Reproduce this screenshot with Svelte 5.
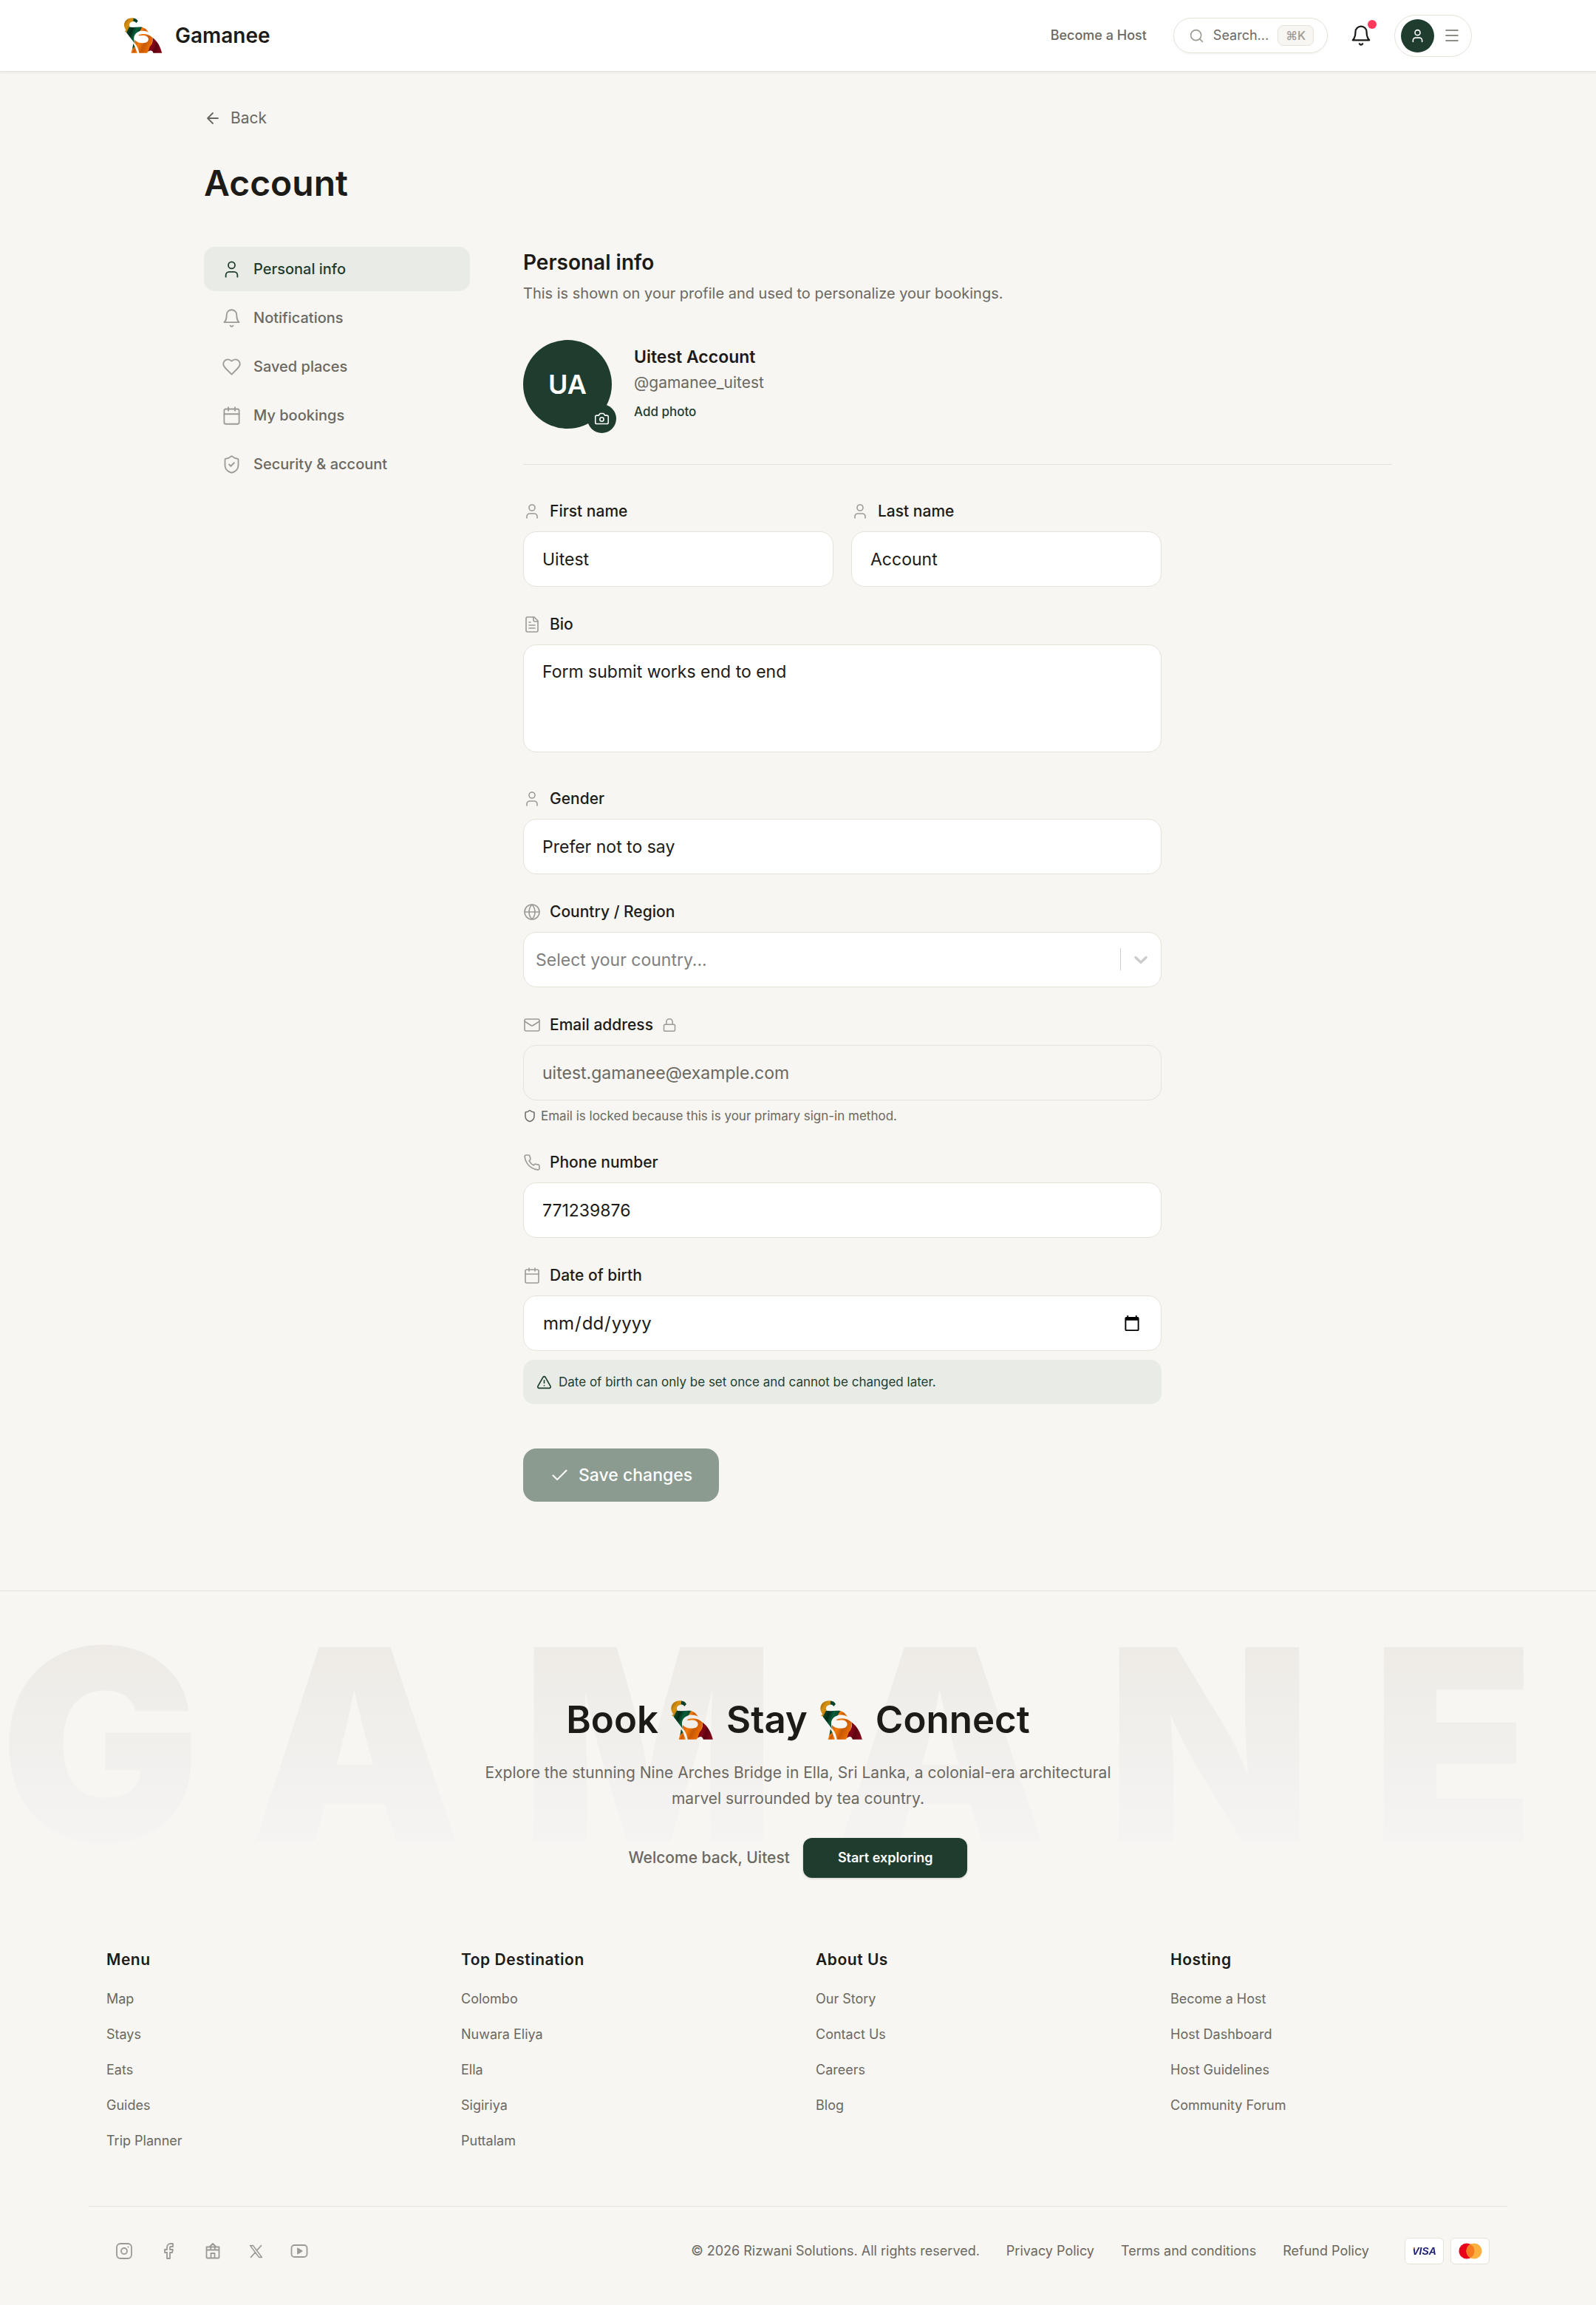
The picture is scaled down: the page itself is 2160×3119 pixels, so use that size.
<script lang="ts">
  const navItems = [
    { icon: "user", label: "Personal info" },
    { icon: "bell", label: "Notifications" },
    { icon: "heart", label: "Saved places" },
    { icon: "calendar", label: "My bookings" },
    { icon: "shieldCheck", label: "Security & account" },
  ];

  const footerColumns = [
    { title: "Menu", links: ["Map", "Stays", "Eats", "Guides", "Trip Planner"] },
    { title: "Top Destination", links: ["Colombo", "Nuwara Eliya", "Ella", "Sigiriya", "Puttalam"] },
    { title: "About Us", links: ["Our Story", "Contact Us", "Careers", "Blog"] },
    { title: "Hosting", links: ["Become a Host", "Host Dashboard", "Host Guidelines", "Community Forum"] },
  ];

  const socials = [
    { icon: "instagram", label: "Instagram", size: 24 },
    { icon: "facebook", label: "Facebook", size: 24 },
    { icon: "store", label: "Store", size: 24 },
    { icon: "x", label: "X", size: 21 },
    { icon: "youtube", label: "YouTube", size: 24 },
  ];

  const icons: Record<string, string> = {
    user: '<path d="M19 21v-2a4 4 0 0 0-4-4H9a4 4 0 0 0-4 4v2"/><circle cx="12" cy="7" r="4"/>',
    bell: '<path d="M6 8a6 6 0 0 1 12 0c0 7 3 9 3 9H3s3-2 3-9"/><path d="M10.3 21a1.94 1.94 0 0 0 3.4 0"/>',
    heart: '<path d="M19 14c1.49-1.46 3-3.21 3-5.5A5.5 5.5 0 0 0 16.5 3c-1.76 0-3 .5-4.5 2-1.5-1.5-2.74-2-4.5-2A5.5 5.5 0 0 0 2 8.5c0 2.3 1.5 4.05 3 5.5l7 7Z"/>',
    calendar: '<path d="M8 2v4M16 2v4"/><rect x="3" y="4" width="18" height="18" rx="2"/><path d="M3 10h18"/>',
    shield: '<path d="M20 13c0 5-3.5 7.5-7.66 8.95a1 1 0 0 1-.67-.01C7.5 20.5 4 18 4 13V6a1 1 0 0 1 1-1c2 0 4.5-1.2 6.24-2.72a1.17 1.17 0 0 1 1.52 0C14.51 3.81 17 5 19 5a1 1 0 0 1 1 1z"/>',
    shieldCheck: '<path d="M20 13c0 5-3.5 7.5-7.66 8.95a1 1 0 0 1-.67-.01C7.5 20.5 4 18 4 13V6a1 1 0 0 1 1-1c2 0 4.5-1.2 6.24-2.72a1.17 1.17 0 0 1 1.52 0C14.51 3.81 17 5 19 5a1 1 0 0 1 1 1z"/><path d="m9 12 2 2 4-4"/>',
    search: '<circle cx="11" cy="11" r="8"/><path d="m21 21-4.3-4.3"/>',
    menu: '<path d="M4 5h16M4 12h16M4 19h16"/>',
    back: '<path d="m12 19-7-7 7-7M19 12H5"/>',
    camera: '<path d="M14.5 4h-5L7 7H4a2 2 0 0 0-2 2v9a2 2 0 0 0 2 2h16a2 2 0 0 0 2-2V9a2 2 0 0 0-2-2h-3l-2.5-3z"/><circle cx="12" cy="13" r="3"/>',
    file: '<path d="M15 2H6a2 2 0 0 0-2 2v16a2 2 0 0 0 2 2h12a2 2 0 0 0 2-2V7Z"/><path d="M14 2v4a2 2 0 0 0 2 2h4M10 9H8M16 13H8M16 17H8"/>',
    globe: '<circle cx="12" cy="12" r="10"/><path d="M12 2a14.5 14.5 0 0 0 0 20 14.5 14.5 0 0 0 0-20M2 12h20"/>',
    mail: '<rect x="2" y="4" width="20" height="16" rx="2"/><path d="m22 7-8.97 5.7a1.94 1.94 0 0 1-2.06 0L2 7"/>',
    lock: '<rect x="3" y="11" width="18" height="11" rx="2"/><path d="M7 11V7a5 5 0 0 1 10 0v4"/>',
    phone: '<path d="M22 16.92v3a2 2 0 0 1-2.18 2 19.79 19.79 0 0 1-8.63-3.07 19.5 19.5 0 0 1-6-6 19.79 19.79 0 0 1-3.07-8.67A2 2 0 0 1 4.11 2h3a2 2 0 0 1 2 1.72 12.84 12.84 0 0 0 .7 2.81 2 2 0 0 1-.45 2.11L8.09 9.91a16 16 0 0 0 6 6l1.27-1.27a2 2 0 0 1 2.11-.45 12.84 12.84 0 0 0 2.81.7A2 2 0 0 1 22 16.92z"/>',
    alert: '<path d="m21.73 18-8-14a2 2 0 0 0-3.48 0l-8 14A2 2 0 0 0 4 21h16a2 2 0 0 0 1.73-3M12 9v4M12 17h.01"/>',
    check: '<path d="M20 6 9 17l-5-5"/>',
    instagram: '<rect x="2" y="2" width="20" height="20" rx="5"/><circle cx="12" cy="12" r="4"/><path d="M17.5 6.5h.01"/>',
    facebook: '<path d="M18 2h-3a5 5 0 0 0-5 5v3H7v4h3v8h4v-8h3l1-4h-4V7a1 1 0 0 1 1-1h3z"/>',
    store: '<path d="M3.500 6.500h17v14a1 1 0 0 1-1 1h-15a1 1 0 0 1-1-1zM7.500 6.500 12 2l4.500 4.500M3.500 10.500h17M9.200 6.500v4M14.800 6.500v4M9.500 21.500V15h5v6.500"/>',
    x: '<path d="M3 3h4.500L21 21h-4.500zM20 3l-7 7.700M11 13.300 4 21"/>',
    youtube: '<rect x="1.500" y="4" width="21" height="16" rx="4"/><path d="m10 8.500 5.500 3.500-5.500 3.500z" fill="currentColor"/>',
  };

  let firstName = "Uitest";
  let lastName = "Account";
  let bio = "Form submit works end to end";
  let phone = "771239876";
</script>

{#snippet icon(name: string, size: number, stroke: number)}
  <svg class="icon" width={size} height={size} viewBox="0 0 24 24" stroke-width={stroke} aria-hidden="true">
    {@html icons[name]}
  </svg>
{/snippet}

{#snippet elephant(id: string)}
  <svg class="elephant" viewBox="0 0 52 48" aria-hidden="true">
    <defs>
      <linearGradient id="gold-{id}" x1="0" y1="0" x2="1" y2="1">
        <stop offset="0" stop-color="#8a5a0c" />
        <stop offset="0.4" stop-color="#d9920f" />
        <stop offset="1" stop-color="#8e610d" />
      </linearGradient>
      <linearGradient id="green-{id}" x1="0" y1="0" x2="1" y2="0.4">
        <stop offset="0" stop-color="#0b5a36" />
        <stop offset="0.35" stop-color="#032a18" />
        <stop offset="0.6" stop-color="#086039" />
        <stop offset="1" stop-color="#04361f" />
      </linearGradient>
      <linearGradient id="orange-{id}" x1="0" y1="0" x2="1" y2="0.5">
        <stop offset="0" stop-color="#b74e05" />
        <stop offset="0.4" stop-color="#f57c08" />
        <stop offset="0.65" stop-color="#c95803" />
        <stop offset="1" stop-color="#ee7303" />
      </linearGradient>
      <linearGradient id="red-{id}" x1="0" y1="0" x2="1" y2="0.4">
        <stop offset="0" stop-color="#56040f" />
        <stop offset="0.45" stop-color="#850719" />
        <stop offset="0.7" stop-color="#5c0310" />
        <stop offset="1" stop-color="#7d0717" />
      </linearGradient>
    </defs>
    <path fill="url(#gold-{id})" d="M13 .5C6-.8 0 3.500 0 10c0 3 1.500 5 2.600 7l-2 1.300 3 1.700 4.500-6.500C5.500 10 7 5.500 12.500 5z" />
    <path fill="#07412a" d="M12.500.4c3 .3 5.200 1.600 6.200 4.200l-2.400 2.600c-.8-1.500-2-2.300-4-2.200z" />
    <path fill="url(#green-{id})" d="M7 12.500c6 1.200 11-.6 17.500.2L21.500 18c-4.500 1.600-7 4-8 7.500-.5 3-.2 6 1 9.500L3 20z" />
    <path fill="url(#orange-{id})" d="M24.300 12.700c4.200 1.300 7 3.800 8.700 7-4-2-7.500-2.200-11.500-1.700z" />
    <path fill="#0b4c2c" d="m12.300 35 2.500 4.500-4 4z" />
    <path fill="url(#orange-{id})" d="m14.500 39 3.200 8.800H9.300l1.500-5z" />
    <path
      fill="url(#orange-{id})"
      d="M19 23.800c5.500-3 13.500-2.600 19.600 3.200L37 40l-6 7.800H20.300c-.8-5-2.600-9.500-5.800-13.300l-.3-4.500c3.500 4.200 11.300 5.200 16 3.200 3.800-2 3.600-6.500-.4-8.500-3.300-1.500-7 .4-10.800-.9z"
    />
    <path fill="url(#red-{id})" d="M38.500 27c6.500 4.500 10.500 12 12.700 20.800H39.500c-1-3.600-3.500-4.500-7-2l2.500-7c2.500-2 4-6 3.500-11.800z" />
  </svg>
{/snippet}

<div class="page">
  <header>
    <div class="header-inner">
      <a class="brand" href="#home">
        {@render elephant("brand")}
        <span>Gamanee</span>
      </a>
      <div class="header-actions">
        <a class="host-link" href="#host">Become a Host</a>
        <button class="search">
          {@render icon("search", 21, 1.8)}
          <span>Search...</span>
          <kbd>⌘K</kbd>
        </button>
        <button class="bell" aria-label="Notifications">
          {@render icon("bell", 30, 1.8)}
          <span class="dot"></span>
        </button>
        <button class="profile-menu" aria-label="Open menu">
          <span class="mini-avatar">{@render icon("user", 21, 1.8)}</span>
          {@render icon("menu", 24, 1.6)}
        </button>
      </div>
    </div>
  </header>

  <main>
    <a class="back" href="#back">{@render icon("back", 24, 1.8)} Back</a>
    <h1>Account</h1>

    <div class="layout">
      <nav>
        {#each navItems as item, i}
          <a href="#{item.icon}" class:active={i === 0}>
            {@render icon(item.icon, 27, 1.6)}
            {item.label}
          </a>
        {/each}
      </nav>

      <section>
        <h2>Personal info</h2>
        <p class="lead">This is shown on your profile and used to personalize your bookings.</p>

        <div class="profile">
          <div class="avatar">
            UA
            <button class="camera" aria-label="Change photo">{@render icon("camera", 21, 1.8)}</button>
          </div>
          <div class="profile-text">
            <strong>Uitest Account</strong>
            <span>@gamanee_uitest</span>
            <button class="add-photo">Add photo</button>
          </div>
        </div>

        <form>
          <div class="row">
            <div class="field">
              <label for="first">{@render icon("user", 24, 1.6)} First name</label>
              <input id="first" type="text" bind:value={firstName} />
            </div>
            <div class="field">
              <label for="last">{@render icon("user", 24, 1.6)} Last name</label>
              <input id="last" type="text" bind:value={lastName} />
            </div>
          </div>

          <div class="field bio">
            <label for="bio">{@render icon("file", 24, 1.6)} Bio</label>
            <textarea id="bio" bind:value={bio}></textarea>
          </div>

          <div class="field">
            <label for="gender">{@render icon("user", 24, 1.6)} Gender</label>
            <select id="gender">
              <option>Prefer not to say</option>
              <option>Female</option>
              <option>Male</option>
            </select>
          </div>

          <div class="field">
            <label for="country">{@render icon("globe", 24, 1.6)} Country / Region</label>
            <div class="country">
              <select id="country">
                <option>Select your country...</option>
                <option>Sri Lanka</option>
              </select>
              <span class="indicator">
                <svg width="30" height="30" viewBox="0 0 20 20" fill="currentColor" aria-hidden="true">
                  <path
                    d="M4.516 7.548c.436-.446 1.043-.481 1.576 0L10 11.295l3.908-3.747c.533-.481 1.141-.446 1.574 0 .436.445.408 1.197 0 1.615-.406.418-4.695 4.502-4.695 4.502a1.095 1.095 0 0 1-1.576 0S4.924 9.581 4.516 9.163s-.436-1.170 0-1.615z"
                  />
                </svg>
              </span>
            </div>
          </div>

          <div class="field">
            <label for="email">
              {@render icon("mail", 24, 1.6)} Email address {@render icon("lock", 20, 1.8)}
            </label>
            <input id="email" type="email" value="uitest.gamanee@example.com" readonly />
            <p class="hint">{@render icon("shield", 18, 2)} Email is locked because this is your primary sign-in method.</p>
          </div>

          <div class="field">
            <label for="phone">{@render icon("phone", 24, 1.6)} Phone number</label>
            <input id="phone" type="tel" bind:value={phone} />
          </div>

          <div class="field">
            <label for="dob">{@render icon("calendar", 24, 1.6)} Date of birth</label>
            <input id="dob" type="date" />
            <p class="notice">{@render icon("alert", 21, 1.8)} Date of birth can only be set once and cannot be changed later.</p>
          </div>

          <button class="save" type="submit" disabled>{@render icon("check", 27, 1.8)} Save changes</button>
        </form>
      </section>
    </div>
  </main>

  <footer>
    <div class="watermark" aria-hidden="true">GAMANEE</div>

    <div class="cta">
      <h2>Book {@render elephant("one")} Stay {@render elephant("two")} Connect</h2>
      <p>
        Explore the stunning Nine Arches Bridge in Ella, Sri Lanka, a colonial-era architectural
        marvel surrounded by tea country.
      </p>
      <div class="welcome">
        <span>Welcome back, Uitest</span>
        <button>Start exploring</button>
      </div>
    </div>

    <div class="columns">
      {#each footerColumns as column}
        <div>
          <h3>{column.title}</h3>
          <ul>
            {#each column.links as link}
              <li><a href="#footer">{link}</a></li>
            {/each}
          </ul>
        </div>
      {/each}
    </div>

    <div class="bottom">
      <div class="socials">
        {#each socials as social}
          <a href="#social" aria-label={social.label}>{@render icon(social.icon, social.size, 1.8)}</a>
        {/each}
      </div>
      <div class="legal">
        <span>© 2026 Rizwani Solutions. All rights reserved.</span>
        <a href="#privacy">Privacy Policy</a>
        <a href="#terms">Terms and conditions</a>
        <a href="#refund">Refund Policy</a>
        <div class="cards">
          <span class="card"><span class="visa">VISA</span></span>
          <span class="card">
            <svg width="32" height="22" viewBox="0 0 32 22" aria-label="Mastercard" role="img">
              <circle cx="11" cy="11" r="10.500" fill="#eb001b" />
              <circle cx="21" cy="11" r="10.500" fill="#fbb040" />
              <path d="M16 1.800a10.500 10.500 0 0 1 0 18.400 10.500 10.500 0 0 1 0-18.400z" fill="#f47b20" />
            </svg>
          </span>
        </div>
      </div>
    </div>
  </footer>
</div>

<style>
  :global(body) {
    margin: 0;
    background: #f7f6f2;
  }

  .page {
    --ink: #1c1b18;
    --muted: #6b6861;
    --soft: #9c9a94;
    --line: #e6e2d9;
    --green: #1f3d2f;
    --tint: #e9ece6;
    font-family: Inter, "Liberation Sans", sans-serif;
    font-size: 20px;
    line-height: 30px;
    color: var(--ink);
    background: #f7f6f2;
  }

  .page * {
    box-sizing: border-box;
  }

  a {
    color: inherit;
    text-decoration: none;
  }

  button,
  input,
  select,
  textarea {
    font: inherit;
    color: inherit;
  }

  button {
    border: 0;
    padding: 0;
    background: none;
    cursor: pointer;
  }

  h1,
  h2,
  h3,
  p,
  ul {
    margin: 0;
    padding: 0;
  }

  ul {
    list-style: none;
  }

  .icon {
    flex: none;
    fill: none;
    stroke: currentColor;
    stroke-linecap: round;
    stroke-linejoin: round;
  }

  /* header */
  header {
    background: #fff;
    border-bottom: 1px solid var(--line);
    box-shadow: 0 1px 4px rgba(28, 27, 24, 0.08);
  }

  .header-inner {
    display: flex;
    align-items: center;
    justify-content: space-between;
    max-width: 1872px;
    height: 96px;
    margin: 0 auto;
    padding: 0 24px;
  }

  .brand {
    display: flex;
    align-items: center;
    gap: 17px;
    font-size: 28px;
    font-weight: 600;
  }

  .brand .elephant {
    width: 52px;
    height: 48px;
  }

  .header-actions {
    display: flex;
    align-items: center;
    gap: 15px;
    color: var(--muted);
  }

  .host-link {
    margin-right: 21px;
    font-size: 18px;
    font-weight: 500;
  }

  .search {
    display: flex;
    align-items: center;
    gap: 12px;
    height: 48px;
    padding: 0 18px 0 20px;
    border: 1px solid var(--line);
    border-radius: 24px;
    box-shadow: 0 1px 3px rgba(28, 27, 24, 0.06);
    font-size: 18px;
  }

  .search .icon {
    color: var(--soft);
  }

  kbd {
    padding: 0 10px;
    border: 1px solid var(--line);
    border-radius: 8px;
    background: #f7f6f2;
    font: 500 16px/26px Inter, "DejaVu Sans", sans-serif;
    color: var(--soft);
  }

  .bell {
    position: relative;
    display: flex;
    align-items: center;
    justify-content: center;
    width: 60px;
    height: 60px;
    color: var(--ink);
  }

  .dot {
    position: absolute;
    top: 9px;
    right: 9px;
    width: 12px;
    height: 12px;
    border-radius: 50%;
    background: #ff385c;
  }

  .profile-menu {
    display: flex;
    align-items: center;
    gap: 12px;
    height: 57px;
    padding: 0 14px 0 8px;
    border: 1px solid var(--line);
    border-radius: 29px;
    color: var(--muted);
  }

  .mini-avatar {
    display: flex;
    align-items: center;
    justify-content: center;
    width: 45px;
    height: 45px;
    border-radius: 50%;
    background: var(--green);
    color: #fff;
  }

  /* account */
  main {
    max-width: 1656px;
    margin: 0 auto;
    padding: 48px 24px 120px;
  }

  .back {
    display: inline-flex;
    align-items: center;
    gap: 12px;
    font-size: 21px;
    color: var(--muted);
  }

  h1 {
    margin: 38px 0 56px;
    font-size: 48px;
    line-height: 60px;
    font-weight: 600;
  }

  .layout {
    display: grid;
    grid-template-columns: 360px 1fr;
    gap: 72px;
    align-items: start;
  }

  nav {
    display: grid;
    gap: 6px;
  }

  nav a {
    display: flex;
    align-items: center;
    gap: 16px;
    height: 60px;
    padding: 0 24px;
    border-radius: 15px;
    font-weight: 500;
    color: var(--muted);
  }

  nav .icon {
    color: var(--soft);
  }

  nav .active {
    background: var(--tint);
  }

  nav .active,
  nav .active .icon {
    color: var(--green);
  }

  section h2 {
    font-size: 28px;
    line-height: 42px;
    font-weight: 600;
  }

  .lead {
    margin-top: 6px;
    color: var(--muted);
  }

  .profile {
    display: flex;
    align-items: center;
    gap: 30px;
    margin: 48px 0;
    padding-bottom: 48px;
    border-bottom: 1px solid #e4e2dc;
  }

  .avatar {
    position: relative;
    display: flex;
    align-items: center;
    justify-content: center;
    width: 120px;
    height: 120px;
    border-radius: 50%;
    background: var(--green);
    color: #fff;
    font-size: 36px;
    font-weight: 600;
  }

  .camera {
    position: absolute;
    right: -6px;
    bottom: -6px;
    display: flex;
    align-items: center;
    justify-content: center;
    width: 39px;
    height: 39px;
    border-radius: 50%;
    background: var(--green);
    color: #fff;
  }

  .profile-text {
    display: grid;
    justify-items: start;
    gap: 5px;
    font-size: 21px;
    color: var(--muted);
  }

  .profile-text strong {
    font-size: 23px;
    font-weight: 600;
    color: var(--ink);
  }

  .profile-text .add-photo {
    margin-top: 4px;
    font-size: 17px;
    font-weight: 500;
    color: var(--green);
  }

  form {
    display: grid;
    gap: 36px;
    max-width: 864px;
  }

  .row {
    display: grid;
    grid-template-columns: 1fr 1fr;
    gap: 24px;
  }

  .field {
    display: flex;
    flex-direction: column;
    min-width: 0;
  }

  .bio {
    margin-bottom: 12px;
  }

  label {
    display: flex;
    align-items: center;
    gap: 12px;
    margin-bottom: 12px;
    font-size: 21px;
    font-weight: 500;
  }

  label .icon {
    color: var(--soft);
  }

  input,
  select,
  textarea {
    width: 100%;
    height: 75px;
    padding: 0 25px;
    border: 1px solid var(--line);
    border-radius: 18px;
    background: #fff;
    font-size: 23px;
    outline: none;
    appearance: none;
  }

  textarea {
    height: 146px;
    padding: 21px 25px;
    resize: none;
  }

  input[readonly] {
    background: #f7f6f2;
    color: var(--muted);
  }

  input[type="date"] {
    font-size: 24px;
  }

  .country {
    position: relative;
  }

  .country select {
    padding: 0 16px;
    color: #808080;
  }

  .indicator {
    position: absolute;
    top: 22px;
    right: 1px;
    display: flex;
    padding: 0 12px;
    border-left: 1px solid #ccc;
    color: #ccc;
    pointer-events: none;
  }

  .hint,
  .notice {
    display: flex;
    align-items: center;
    font-size: 17px;
    line-height: 24px;
  }

  .hint {
    gap: 6px;
    margin-top: 9px;
    color: var(--muted);
  }

  .notice {
    gap: 9px;
    margin-top: 12px;
    padding: 18px;
    border-radius: 15px;
    background: var(--tint);
    color: var(--green);
  }

  .save {
    display: flex;
    align-items: center;
    gap: 12px;
    justify-self: start;
    height: 72px;
    margin-top: 24px;
    padding: 0 36px;
    border-radius: 18px;
    background: #8c9b90;
    color: #fff;
    font-size: 23px;
    font-weight: 500;
  }

  /* footer */
  footer {
    position: relative;
    overflow: hidden;
    padding: 144px 120px 54px;
    border-top: 1px solid #e4e2dc;
  }

  .watermark {
    position: absolute;
    top: 27px;
    left: 0;
    font-size: 360px;
    line-height: 360px;
    font-weight: 900;
    letter-spacing: 81px;
    white-space: nowrap;
    color: transparent;
    background: linear-gradient(#eeebe6 12%, #f5f4f3 88%);
    background-clip: text;
    pointer-events: none;
  }

  .cta {
    position: relative;
    text-align: center;
  }

  .cta h2 {
    display: flex;
    align-items: center;
    justify-content: center;
    gap: 17px;
    font-size: 51px;
    line-height: 60px;
    font-weight: 600;
  }

  .cta .elephant {
    width: 58px;
    height: 53px;
  }

  .cta p {
    max-width: 864px;
    margin: 24px auto 36px;
    font-size: 21px;
    line-height: 35px;
    color: var(--muted);
  }

  .welcome {
    display: flex;
    align-items: center;
    justify-content: center;
    gap: 18px;
    font-size: 21px;
    font-weight: 500;
    color: var(--muted);
  }

  .welcome button {
    height: 54px;
    padding: 0 47px;
    border-radius: 12px;
    background: var(--green);
    box-shadow: 0 1px 3px rgba(28, 27, 24, 0.2);
    color: #fff;
    font-size: 18px;
    font-weight: 600;
  }

  .columns {
    display: grid;
    grid-template-columns: repeat(4, 1fr);
    margin: 96px -24px 0 0;
    padding-left: 24px;
    color: var(--muted);
    font-size: 18px;
    line-height: 24px;
  }

  .columns h3 {
    margin-bottom: 26px;
    font-size: 21px;
    line-height: 30px;
    font-weight: 600;
    letter-spacing: 0.025em;
    color: var(--ink);
  }

  .columns ul {
    display: grid;
    gap: 24px;
  }

  .bottom {
    display: flex;
    align-items: center;
    justify-content: space-between;
    margin-top: 76px;
    padding: 36px 24px 0;
    border-top: 1px solid #e4e2dc;
    font-size: 18px;
    color: var(--muted);
  }

  .socials {
    display: flex;
    gap: 12px;
    color: var(--soft);
  }

  .socials a {
    display: flex;
    align-items: center;
    padding: 12px;
  }

  .legal {
    display: flex;
    align-items: center;
    gap: 36px;
  }

  .cards {
    display: flex;
    gap: 9px;
    margin-left: 12px;
  }

  .card {
    display: flex;
    align-items: center;
    justify-content: center;
    width: 53px;
    height: 36px;
    border: 1px solid var(--line);
    border-radius: 6px;
    background: #fff;
  }

  .visa {
    padding: 0 1px;
    font: italic 700 14px "Liberation Sans", Arial, sans-serif;
    color: transparent;
    background: linear-gradient(120deg, #f7a600 14%, #1a1f71 14%);
    background-clip: text;
  }
</style>
